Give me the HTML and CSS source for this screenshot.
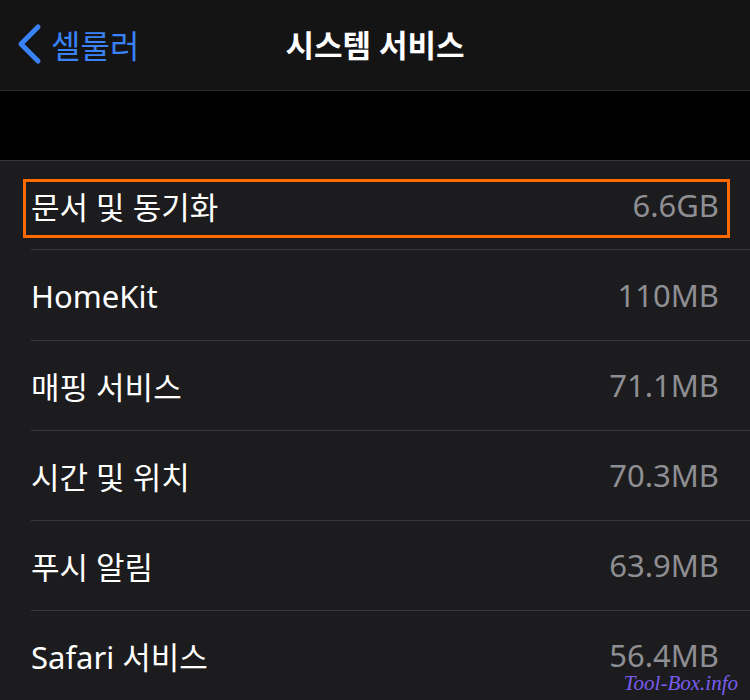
FILE: index.html
```html
<!DOCTYPE html>
<html lang="ko">

<head>
    <meta charset="UTF-8">
    <meta name="viewport" content="width=device-width, initial-scale=1.0">
    <title>시스템 서비스</title>
    <link rel="stylesheet" href="styles.css">
</head>

<body>
    <div class="nav">
        <a href="javascript:;" class="back">
            <svg class="chevron" width="26" height="42" viewBox="0 0 26 42">
                <path d="M22 4 L5 21 L22 38" fill="none" stroke="#3a82f7" stroke-width="5" stroke-linecap="round" stroke-linejoin="round" />
            </svg>
            <span>셀룰러</span>
        </a>
        <h1 class="title">시스템 서비스</h1>
    </div>

    <div class="gap"></div>

    <ul class="list">
        <li class="row">
            <div class="cell marked">
                <span class="name">문서 및 동기화</span>
                <span class="size">6.6GB</span>
            </div>
        </li>
        <li class="row">
            <div class="cell">
                <span class="name">HomeKit</span>
                <span class="size">110MB</span>
            </div>
        </li>
        <li class="row">
            <div class="cell">
                <span class="name">매핑 서비스</span>
                <span class="size">71.1MB</span>
            </div>
        </li>
        <li class="row">
            <div class="cell">
                <span class="name">시간 및 위치</span>
                <span class="size">70.3MB</span>
            </div>
        </li>
        <li class="row">
            <div class="cell">
                <span class="name">푸시 알림</span>
                <span class="size">63.9MB</span>
            </div>
        </li>
        <li class="row">
            <div class="cell">
                <span class="name">Safari 서비스</span>
                <span class="size">56.4MB</span>
            </div>
        </li>
    </ul>

    <div class="mark">Tool-Box.info</div>
</body>

</html>
```

FILE: styles.css
```css
* {
    margin: 0;
    padding: 0;
    box-sizing: border-box;
}

a {
    text-decoration: none;
}

body {
    position: relative;
    width: 750px;
    height: 700px;
    overflow: hidden;
    background-color: #1c1c1e;
    font-family: "Noto Sans", "Noto Sans CJK KR", sans-serif;
}

.nav {
    position: relative;
    display: flex;
    align-items: center;
    height: 91px;
    background-color: #141414;
    border-bottom: 1px solid #2a2a2c;
    padding-left: 16px;
}

.back {
    display: flex;
    align-items: center;
    gap: 9px;
    color: #3a82f7;
    font-size: 32px;
    margin-top: -2px;
}

.title {
    position: absolute;
    left: 0;
    right: 0;
    top: 21px;
    text-align: center;
    color: #fff;
    font-size: 31px;
    font-weight: 700;
    pointer-events: none;
}

.gap {
    height: 70px;
    background-color: #000;
    border-bottom: 1px solid #38383a;
}

.list {
    list-style-type: none;
}

.row {
    height: 90px;
    padding-left: 31px;
}

.cell {
    display: flex;
    justify-content: space-between;
    align-items: center;
    height: 90px;
    padding-right: 31px;
    border-bottom: 1px solid #38383a;
}

.row:first-child .cell {
    height: 89px;
}

.name {
    color: #fff;
    font-size: 31px;
}

.size {
    color: #8e8e93;
    font-size: 31px;
    line-height: 1;
}

.marked {
    position: relative;
}

.marked::before {
    content: "";
    position: absolute;
    left: -8px;
    right: 20px;
    top: 18px;
    height: 53px;
    border: 3px solid #ff6a00;
}

.mark {
    position: absolute;
    right: 12px;
    bottom: 6px;
    color: #7b5cf0;
    font-family: "Liberation Serif", serif;
    font-style: italic;
    font-size: 21px;
    line-height: 1;
}
```
